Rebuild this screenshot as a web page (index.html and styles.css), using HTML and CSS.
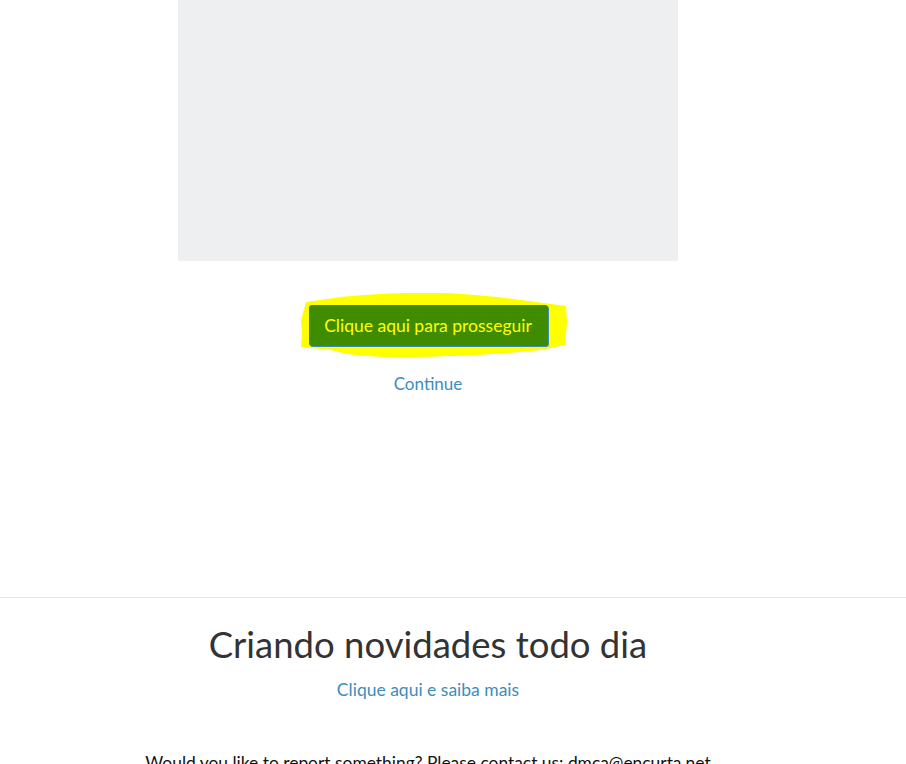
FILE: index.html
```html
<!DOCTYPE html>
<html lang="pt">
<head>
    <meta charset="utf-8">
    <title>Encurta</title>
    <link rel="stylesheet" href="styles.css">
</head>
<body>

<div class="page">
    <div class="ad-box"></div>

    <div class="actions">
        <div class="go-wrap">
            <svg class="marker" width="270" height="70" viewBox="0 0 270 70">
                <path d="M5 9 L40 4 C70 1 110 -1 140 0 C170 1 200 4 220 7 L265 13 L266 30 L264 52 L240 57 C200 61 150 64 100 64 C70 64 50 63 30 57 L0 54 L1 40 L0 27 Z" fill="#ffff00"/>
            </svg>
            <a class="go-button" href="#">Clique aqui para prosseguir</a>
        </div>
        <a class="continue" href="#">Continue</a>
    </div>
</div>

<div class="footer">
    <div class="page">
        <h1>Criando novidades todo dia</h1>
        <a class="more" href="#">Clique aqui e saiba mais</a>
        <p class="report">Would you like to report something? Please contact us: dmca@encurta.net</p>
    </div>
</div>

</body>
</html>
```

FILE: styles.css
```css
body {
    margin: 0;
    padding: 0;
    background: #fff;
    font-family: Lato, "Noto Sans", sans-serif;
    color: #333;
}
a {
    color: #3c8dbc;
    text-decoration: none;
}
.page {
    width: 856px;
    text-align: center;
}
.ad-box {
    width: 500px;
    height: 261px;
    margin: 0 auto;
    background: #eeeff1;
}
.actions {
    padding-top: 44px;
    height: 292px;
}
.go-wrap {
    position: relative;
    display: inline-block;
}
.marker {
    position: absolute;
    left: -8px;
    top: -12px;
}
.go-button {
    position: relative;
    display: inline-block;
    width: 239px;
    height: 41px;
    line-height: 41px;
    box-sizing: border-box;
    background: #408c00;
    color: #ffff00;
    font-size: 17.5px;
    border-radius: 3px;
    box-shadow: 1px 1px 0 #3c8dbc;
}
.continue {
    display: block;
    margin-top: 26px;
    font-size: 17px;
    line-height: 24px;
}
.footer {
    border-top: 1px solid #e8e8e8;
}
.footer h1 {
    margin: 24px 0 0;
    font-size: 36.5px;
    font-weight: 400;
    line-height: 44px;
}
.more {
    display: block;
    margin-top: 12px;
    font-size: 17.5px;
    line-height: 24px;
}
.report {
    margin: 50px 0 0;
    font-size: 17.4px;
    color: #111;
}
```
